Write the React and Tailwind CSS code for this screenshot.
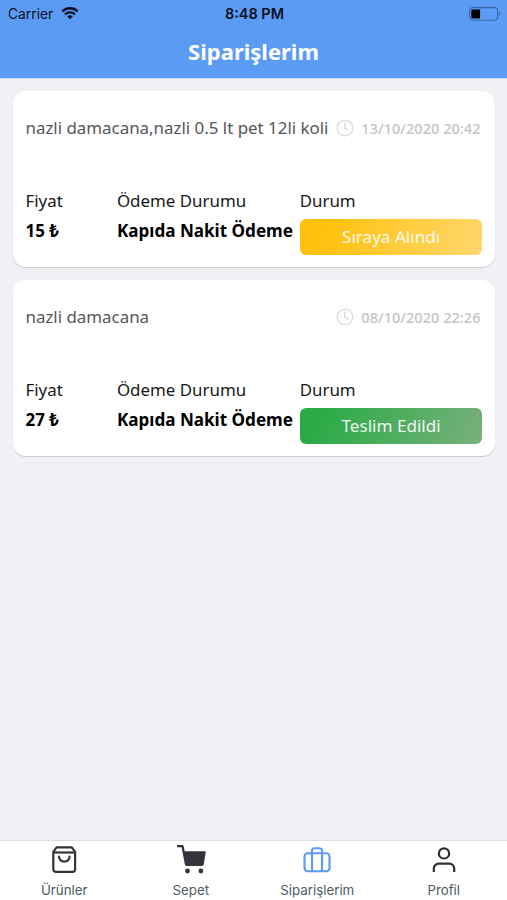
import React from "react";

const orders = [
  {
    id: 1,
    products: "nazli damacana,nazli 0.5 lt pet 12li koli",
    date: "13/10/2020 20:42",
    price: "15 ₺",
    payment: "Kapıda Nakit Ödeme",
    status: "Sıraya Alındı",
    statusClass: "bg-[linear-gradient(110deg,#ffc10b_12%,#ffd76e)]",
  },
  {
    id: 2,
    products: "nazli damacana",
    date: "08/10/2020 22:26",
    price: "27 ₺",
    payment: "Kapıda Nakit Ödeme",
    status: "Teslim Edildi",
    statusClass: "bg-[linear-gradient(110deg,#2bab47_12%,#78b07c)]",
  },
];

const WifiIcon = () => (
  <svg width="18" height="13" viewBox="0 0 18 13" fill="none" stroke="#0a1220">
    <path d="M1.3 4.4a11 11 0 0 1 15.4 0" strokeWidth="2.3" />
    <path d="M4 7.4a7.1 7.1 0 0 1 10 0" strokeWidth="2.2" />
    <path d="M9 12.3 6.2 9.5a4 4 0 0 1 5.6 0Z" fill="#0a1220" stroke="none" />
  </svg>
);

const BatteryIcon = () => (
  <svg width="32" height="14" viewBox="0 0 32 14" fill="none">
    <rect x="0.6" y="0.6" width="28" height="12.6" rx="3.2" stroke="#3767a8" strokeWidth="1.1" />
    <rect x="2.3" y="2.4" width="8.8" height="9" rx="1" fill="#000" />
    <path d="M30.2 4.8c1.5.6 1.5 3.6 0 4.2Z" fill="#3767a8" />
  </svg>
);

const ClockIcon = () => (
  <svg width="18" height="18" viewBox="0 0 18 18" fill="none" stroke="#dedede" strokeWidth="1.5">
    <circle cx="9" cy="9" r="7.8" />
    <path d="M8.8 4v5.2l3 2" strokeLinecap="round" strokeLinejoin="round" />
  </svg>
);

const BagIcon = () => (
  <svg width="26" height="28" viewBox="0 0 26 28" fill="none" stroke="#33343b" strokeWidth="2.2">
    <path
      d="M2.3 5.8 5.6 1.3h15.2l3.300 4.500v17.500a2.600 2.600 0 0 1-2.600 2.600H4.900a2.600 2.600 0 0 1-2.600-2.600Z"
      strokeLinejoin="round"
    />
    <path d="M2.600 6.500h21.200" />
    <path d="M8 10.600c.4 3.200 2.300 5 5.300 5s4.900-1.800 5.300-5" strokeLinecap="round" />
  </svg>
);

const CartIcon = () => (
  <svg width="30" height="30" viewBox="0 0 30 30" fill="#33343b">
    <path d="M1 1.200h5.500l1.100 5.600" fill="none" stroke="#33343b" strokeWidth="2.300" strokeLinejoin="round" />
    <path d="M6.300 6.200h22.500a.900.900 0 0 1 .9 1.100l-1.900 12a2 2 0 0 1-2 1.700H10.900a2 2 0 0 1-2-1.600Z" />
    <circle cx="11.500" cy="26" r="2.400" />
    <circle cx="24.900" cy="26" r="2.400" />
  </svg>
);

const SuitcaseIcon = () => (
  <svg width="28" height="26" viewBox="0 0 28 26" fill="none" stroke="#5c9af3" strokeWidth="2.1">
    <rect x="1.500" y="6.200" width="25" height="18" rx="3.200" />
    <path d="M9 24.200V3.800a2.600 2.600 0 0 1 2.600-2.600h4.800A2.600 2.600 0 0 1 19 3.800v20.400" />
  </svg>
);

const UserIcon = () => (
  <svg width="24" height="26" viewBox="0 0 24 26" fill="none" stroke="#2f2f35" strokeWidth="2.2">
    <circle cx="12" cy="6.400" r="5.100" />
    <path d="M1.800 25v-3.400a5 5 0 0 1 5-5h10.400a5 5 0 0 1 5 5V25" />
  </svg>
);

const tabs = [
  { name: "Ürünler", icon: <BagIcon /> },
  { name: "Sepet", icon: <CartIcon /> },
  { name: "Siparişlerim", icon: <SuitcaseIcon /> },
  { name: "Profil", icon: <UserIcon /> },
];

const OrderCard = ({ order }) => (
  <div className="h-44 rounded-[13px] bg-white pl-[13px] pr-3 pt-[25px] shadow-[0_1px_1px_rgba(0,0,0,0.16)]">
    <div className="flex h-6 items-center justify-between">
      <p className="whitespace-nowrap text-[16.9px] text-[#55565a]">{order.products}</p>

      <div className="flex items-center gap-[7px] pr-0.5">
        <ClockIcon />
        <span className="whitespace-nowrap pt-px text-[14.6px] font-medium text-[#c4c4c4]">
          {order.date}
        </span>
      </div>
    </div>

    <div className="mt-[47px] grid grid-cols-[20%_40%_40%] text-[16.9px] text-[#171717]">
      <div>
        <p className="h-[30px] leading-7">Fiyat</p>
        <p className="font-bold leading-7 text-black">{order.price}</p>
      </div>
      <div>
        <p className="h-[30px] leading-7">Ödeme Durumu</p>
        <p className="whitespace-nowrap text-[17.1px] font-bold leading-7 text-black">{order.payment}</p>
      </div>
      <div>
        <p className="h-8 leading-7">Durum</p>
        <div
          className={`flex h-9 items-center justify-center rounded-md text-[17.1px] text-white/90 ${order.statusClass}`}
        >
          {order.status}
        </div>
      </div>
    </div>
  </div>
);

const App = () => {
  return (
    <div className="flex h-[900px] w-[507px] flex-col overflow-hidden bg-[#eff1f5] font-['Noto_Sans',sans-serif]">
      {/* Header */}
      <header className="h-[79px] border-b border-[#c9dcf8] bg-[#5c9bf4]">
        <div className="grid h-7 grid-cols-[1fr_auto_1fr] items-center pl-2 pr-1.5 font-['Inter',sans-serif] text-[13.8px] text-[#0a1220]">
          <div className="flex items-center gap-2 pb-px">
            <span className="pt-px">Carrier</span>
            <WifiIcon />
          </div>
          <span className="text-[14.5px] font-semibold">8:48 PM</span>
          <div className="flex justify-end pb-px">
            <BatteryIcon />
          </div>
        </div>
        <h1 className="text-center text-[22px] font-bold leading-[47px] text-white">Siparişlerim</h1>
      </header>

      {/* Orders */}
      <main className="flex flex-1 flex-col gap-[13px] px-[12.5px] pt-3">
        {orders.map((order) => (
          <OrderCard key={order.id} order={order} />
        ))}
      </main>

      {/* Bottom tabs */}
      <nav className="grid h-[60px] grid-cols-4 border-t border-[#dcdde0] bg-white pl-px font-['Inter',sans-serif] text-[13.3px] text-[#4b5c63]">
        {tabs.map((tab) => (
          <button key={tab.name} className="flex flex-col items-center">
            <span className="flex h-[38px] items-center justify-center">{tab.icon}</span>
            <span className="leading-[22px]">{tab.name}</span>
          </button>
        ))}
      </nav>
    </div>
  );
};

export default App;
